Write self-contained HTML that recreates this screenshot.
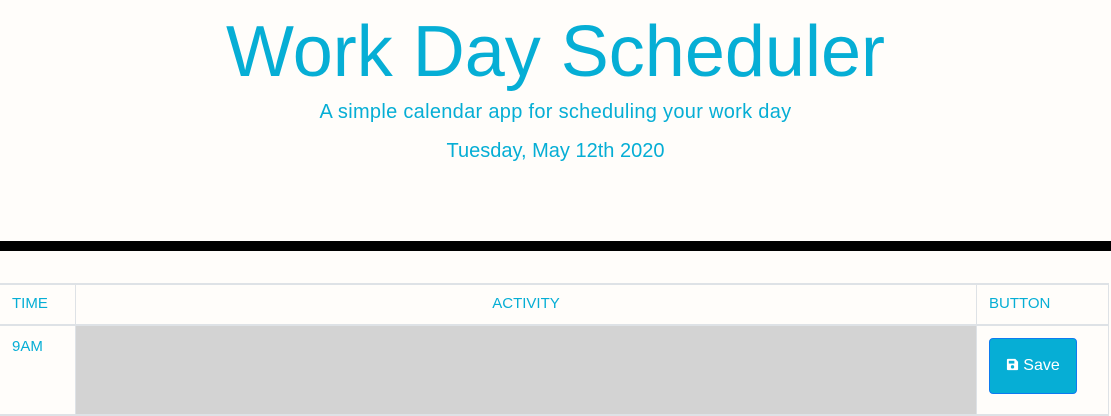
<!DOCTYPE html>
<html><head><style>
body{margin:0;background:#fffdfa;font-family:"Liberation Sans",sans-serif;color:#06aed5;width:1111px;height:416px;overflow:hidden;position:relative}
h1{position:absolute;top:12px;left:0;width:1111px;text-align:center;margin:0;font-weight:400;font-size:72px;line-height:80px}
.p{position:absolute;left:0;width:1111px;text-align:center;font-size:20px}
.bar{position:absolute;top:241px;left:0;width:1111px;height:10px;background:#000}
.c{position:absolute;box-sizing:border-box;font-size:15px}
</style></head><body>
<h1>Work Day Scheduler</h1>
<div class="p" style="top:101px;letter-spacing:0.3px">A simple calendar app for scheduling your work day</div>
<div class="p" style="top:140px">Tuesday, May 12th 2020</div>
<div class="bar"></div>
<div class="c" style="top:283px;left:0;width:1109px;height:2px;background:#dee2e6"></div>
<div class="c" style="top:324px;left:0;width:1109px;height:2px;background:#dee2e6"></div>
<div class="c" style="top:414px;left:0;width:1109px;height:2px;background:#dee2e6"></div>
<div class="c" style="top:283px;left:75px;width:1px;height:133px;background:#dee2e6"></div>
<div class="c" style="top:283px;left:976px;width:1px;height:133px;background:#dee2e6"></div>
<div class="c" style="top:283px;left:1108px;width:1px;height:133px;background:#dee2e6"></div>
<div class="c" style="top:326px;left:76px;width:900px;height:88px;background:#d3d3d3"></div>
<div class="c" style="top:295px;left:12px">TIME</div>
<div class="c" style="top:295px;left:76px;width:900px;text-align:center">ACTIVITY</div>
<div class="c" style="top:295px;left:989px">BUTTON</div>
<div class="c" style="top:338px;left:12px">9AM</div>
<div class="c" style="top:338px;left:989px;width:88px;height:56px;background:#06aed5;border:1px solid #0d7bf0;border-radius:4px;color:#fff;font-size:16px;line-height:54px;text-align:center">
<svg width="13" height="13" viewBox="0 0 14 14" style="vertical-align:-1px;margin-right:4px"><path d="M1 2a1 1 0 0 1 1-1h8l3 3v8a1 1 0 0 1-1 1H2a1 1 0 0 1-1-1z" fill="#fff"/><rect x="3" y="3" width="6" height="3" fill="#06aed5"/><circle cx="7" cy="9.5" r="1.8" fill="#06aed5"/></svg>Save</div>
</body></html>
